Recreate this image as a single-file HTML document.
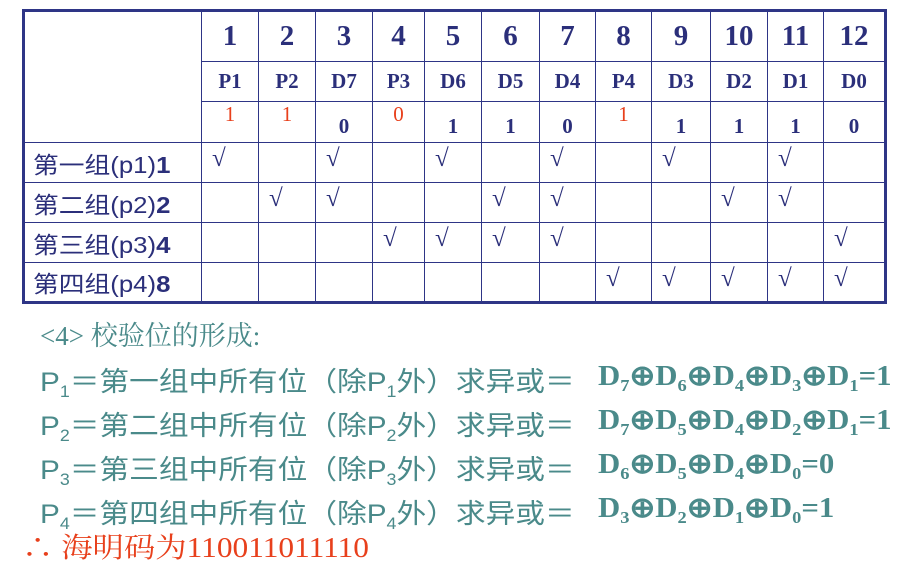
<!DOCTYPE html>
<html><head><meta charset="utf-8"><style>
body{margin:0;width:909px;height:564px;background:#fff;position:relative;overflow:hidden;font-family:"Liberation Sans","Noto Sans CJK SC",sans-serif}
table{position:absolute;left:22px;top:9px;border-collapse:collapse;border:3px solid #2e3586;table-layout:fixed}
td{border:1.5px solid #2e3586;padding:0;color:#2b2f7a;text-align:center;font-family:"Liberation Serif",serif;font-weight:bold;box-sizing:border-box;overflow:hidden}
.n td{font-size:29px;height:51px}
.p td{font-size:21px;height:40px}
.b td{font-size:21px;height:41px;vertical-align:bottom;padding-bottom:3px}
.b td.r{color:#e8401c;font-weight:normal;vertical-align:top;padding-top:0;padding-bottom:0}
.g td{height:40px;font-weight:normal;font-size:25px;text-align:left;padding-left:10px;vertical-align:top;padding-top:2px}
.g td.l{font-family:"Liberation Sans","Noto Sans CJK SC",sans-serif;font-size:23px;padding-left:8px;vertical-align:middle;padding-top:0;white-space:nowrap}
.l span{display:inline-block;transform:scaleX(1.12);transform-origin:left center}
.l b{font-family:"Liberation Sans",sans-serif}
.t{position:absolute;color:#4a8a8a;font-size:27px;white-space:nowrap;font-family:"Liberation Sans","Noto Sans CJK SC",sans-serif;transform-origin:left center}
.d{position:absolute;color:#4a8a8a;font-size:28px;white-space:nowrap;font-family:"Liberation Serif",serif;font-weight:bold;transform-origin:left center;transform:scaleX(1.1)}
sub{font-size:60%;vertical-align:-6px}
</style></head><body>
<table>
<colgroup><col style="width:178px"><col style="width:57px"><col style="width:57px"><col style="width:57px"><col style="width:52px"><col style="width:57px"><col style="width:58px"><col style="width:56px"><col style="width:56px"><col style="width:59px"><col style="width:57px"><col style="width:56px"><col style="width:62px"></colgroup>
<tr class="n"><td rowspan="3"></td><td>1</td><td>2</td><td>3</td><td>4</td><td>5</td><td>6</td><td>7</td><td>8</td><td>9</td><td>10</td><td>11</td><td>12</td></tr>
<tr class="p"><td>P1</td><td>P2</td><td>D7</td><td>P3</td><td>D6</td><td>D5</td><td>D4</td><td>P4</td><td>D3</td><td>D2</td><td>D1</td><td>D0</td></tr>
<tr class="b"><td class="r">1</td><td class="r">1</td><td>0</td><td class="r">0</td><td>1</td><td>1</td><td>0</td><td class="r">1</td><td>1</td><td>1</td><td>1</td><td>0</td></tr>
<tr class="g"><td class="l"><span>第一组(p1)<b>1</b></span></td><td>√</td><td></td><td>√</td><td></td><td>√</td><td></td><td>√</td><td></td><td>√</td><td></td><td>√</td><td></td></tr>
<tr class="g"><td class="l"><span>第二组(p2)<b>2</b></span></td><td></td><td>√</td><td>√</td><td></td><td></td><td>√</td><td>√</td><td></td><td></td><td>√</td><td>√</td><td></td></tr>
<tr class="g"><td class="l"><span>第三组(p3)<b>4</b></span></td><td></td><td></td><td></td><td>√</td><td>√</td><td>√</td><td>√</td><td></td><td></td><td></td><td></td><td>√</td></tr>
<tr class="g"><td class="l"><span>第四组(p4)<b>8</b></span></td><td></td><td></td><td></td><td></td><td></td><td></td><td></td><td>√</td><td>√</td><td>√</td><td>√</td><td>√</td></tr>
</table>
<div class="t" style="left:40px;top:314px;font-size:27px;font-family:'Liberation Serif','Noto Serif CJK SC',serif">&lt;4&gt; 校验位的形成:</div>
<div class="t" style="left:40px;top:360px;transform:scaleX(1.1)">P<sub>1</sub>＝第一组中所有位（除P<sub>1</sub>外）求异或＝</div>
<div class="d" style="left:598px;top:359px">D<sub>7</sub>⊕D<sub>6</sub>⊕D<sub>4</sub>⊕D<sub>3</sub>⊕D<sub>1</sub>=1</div>
<div class="t" style="left:40px;top:404px;transform:scaleX(1.1)">P<sub>2</sub>＝第二组中所有位（除P<sub>2</sub>外）求异或＝</div>
<div class="d" style="left:598px;top:403px">D<sub>7</sub>⊕D<sub>5</sub>⊕D<sub>4</sub>⊕D<sub>2</sub>⊕D<sub>1</sub>=1</div>
<div class="t" style="left:40px;top:448px;transform:scaleX(1.1)">P<sub>3</sub>＝第三组中所有位（除P<sub>3</sub>外）求异或＝</div>
<div class="d" style="left:598px;top:447px">D<sub>6</sub>⊕D<sub>5</sub>⊕D<sub>4</sub>⊕D<sub>0</sub>=0</div>
<div class="t" style="left:40px;top:492px;transform:scaleX(1.1)">P<sub>4</sub>＝第四组中所有位（除P<sub>4</sub>外）求异或＝</div>
<div class="d" style="left:598px;top:491px">D<sub>3</sub>⊕D<sub>2</sub>⊕D<sub>1</sub>⊕D<sub>0</sub>=1</div>
<div class="t" style="left:22px;top:526px;color:#e8401c;font-size:28px;transform:scaleX(1.12);font-family:'Liberation Serif','Noto Serif CJK SC',serif">∴ 海明码为110011011110</div>
</body></html>
